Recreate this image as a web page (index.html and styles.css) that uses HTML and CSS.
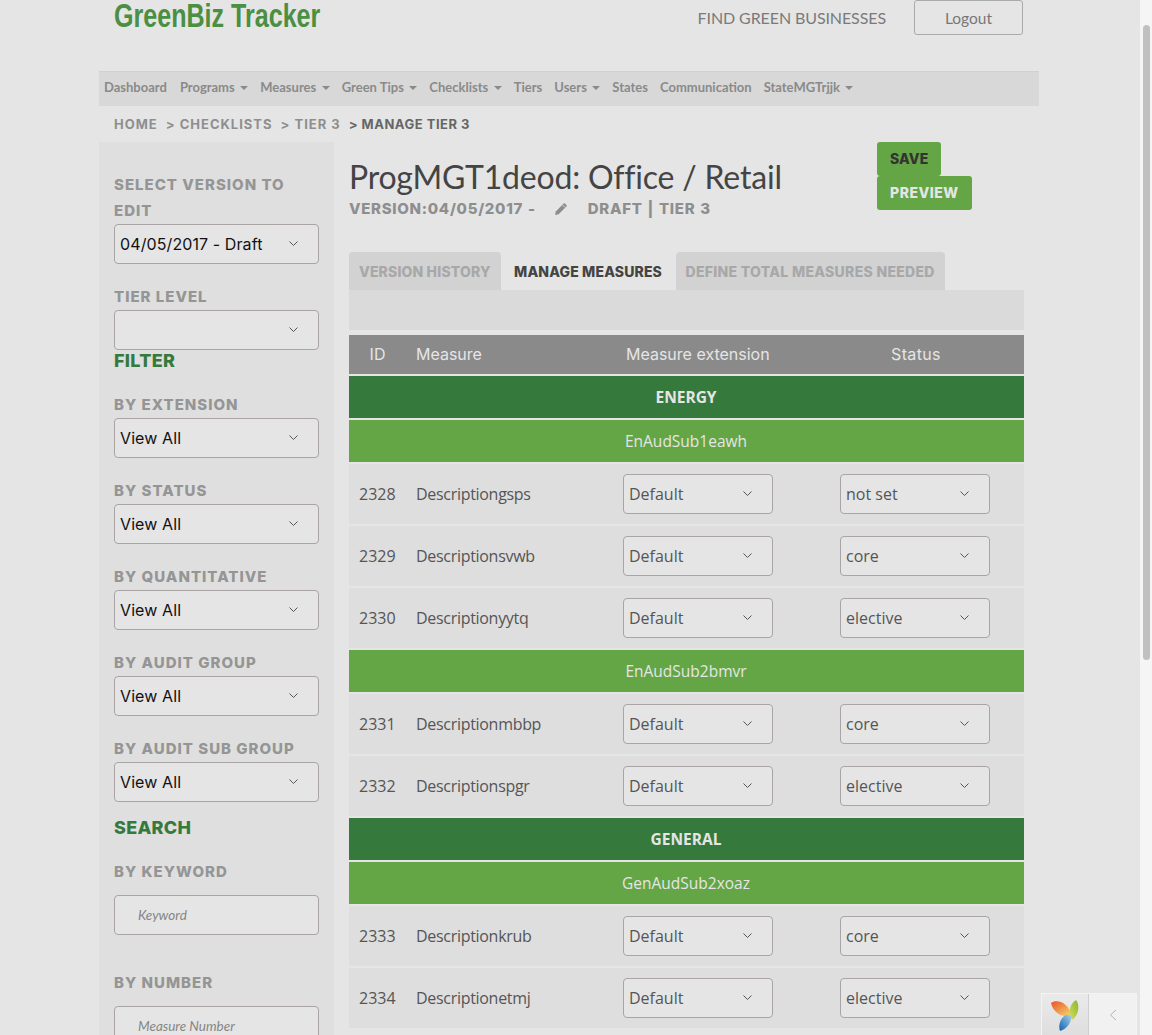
FILE: index.html
```html
<!doctype html>
<html lang="en">
<head>
    <meta http-equiv="Content-Type" content="text/html; charset=utf-8"/>
    <title>GreenBiz Tracker</title>
    <link rel="stylesheet" href="styles.css">
</head>
<body>
<div class="page">
    <div class="header">
        <div class="logo">GreenBiz Tracker</div>
        <a class="find">FIND GREEN BUSINESSES</a>
        <a class="logout">Logout</a>
    </div>

    <ul class="nav">
        <li>Dashboard</li>
        <li class="drop">Programs</li>
        <li class="drop">Measures</li>
        <li class="drop">Green Tips</li>
        <li class="drop">Checklists</li>
        <li>Tiers</li>
        <li class="drop">Users</li>
        <li>States</li>
        <li>Communication</li>
        <li class="drop">StateMGTrjjk</li>
    </ul>

    <div class="crumbs">
        <span>HOME</span>
        <span>&gt; CHECKLISTS</span>
        <span>&gt; TIER 3</span>
        <span class="last">&gt; MANAGE TIER 3</span>
    </div>

    <div class="columns">
        <div class="side">
            <label class="first">SELECT VERSION TO EDIT</label>
            <select class="pick dark"><option>04/05/2017 - Draft</option></select>
            <label class="tier">TIER LEVEL</label>
            <select class="pick"><option></option></select>
            <h4 class="filter">FILTER</h4>
            <label>BY EXTENSION</label>
            <select class="pick dark"><option>View All</option></select>
            <label>BY STATUS</label>
            <select class="pick dark"><option>View All</option></select>
            <label>BY QUANTITATIVE</label>
            <select class="pick dark"><option>View All</option></select>
            <label>BY AUDIT GROUP</label>
            <select class="pick dark"><option>View All</option></select>
            <label>BY AUDIT SUB GROUP</label>
            <select class="pick dark"><option>View All</option></select>
            <h4 class="search">SEARCH</h4>
            <label class="key">BY KEYWORD</label>
            <input class="field" placeholder="Keyword">
            <label class="num">BY NUMBER</label>
            <input class="field" placeholder="Measure Number">
        </div>

        <div class="main">
            <div class="title-row">
                <div class="title-text">
                    <h1>ProgMGT1deod: Office / Retail</h1>
                    <div class="version">
                        <span>VERSION:04/05/2017 -</span>
                        <svg class="pencil" viewBox="0 0 14 14" width="14" height="14"><path d="M1 13l.8-3.600L9.600 1.600a1 1 0 0 1 1.400 0l1.400 1.400a1 1 0 0 1 0 1.400L4.600 12.200z" fill="#8d8d8d"/><path d="M8.400 2.800l2.800 2.800" stroke="#e5e5e5" stroke-width=".8"/></svg>
                        <span>DRAFT | TIER 3</span>
                    </div>
                </div>
                <div class="actions">
                    <a class="btn save">SAVE</a>
                    <a class="btn preview">PREVIEW</a>
                </div>
            </div>

            <div class="tabs">
                <a class="tab">VERSION HISTORY</a>
                <a class="tab on">MANAGE MEASURES</a>
                <a class="tab">DEFINE TOTAL MEASURES NEEDED</a>
            </div>
            <div class="tab-bar"></div>

            <table class="grid">
                <tr class="head">
                    <th class="c-id">ID</th>
                    <th class="c-name">Measure</th>
                    <th class="c-ext">Measure extension</th>
                    <th class="c-status">Status</th>
                </tr>
                <tr class="group"><td colspan="4">ENERGY</td></tr>
                <tr class="sub"><td colspan="4">EnAudSub1eawh</td></tr>
                <tr class="row">
                    <td class="c-id">2328</td><td class="c-name">Descriptiongsps</td>
                    <td class="c-ext"><select class="pick small"><option>Default</option></select></td>
                    <td class="c-status"><select class="pick small"><option>not set</option></select></td>
                </tr>
                <tr class="row">
                    <td class="c-id">2329</td><td class="c-name">Descriptionsvwb</td>
                    <td class="c-ext"><select class="pick small"><option>Default</option></select></td>
                    <td class="c-status"><select class="pick small"><option>core</option></select></td>
                </tr>
                <tr class="row">
                    <td class="c-id">2330</td><td class="c-name">Descriptionyytq</td>
                    <td class="c-ext"><select class="pick small"><option>Default</option></select></td>
                    <td class="c-status"><select class="pick small"><option>elective</option></select></td>
                </tr>
                <tr class="sub"><td colspan="4">EnAudSub2bmvr</td></tr>
                <tr class="row">
                    <td class="c-id">2331</td><td class="c-name">Descriptionmbbp</td>
                    <td class="c-ext"><select class="pick small"><option>Default</option></select></td>
                    <td class="c-status"><select class="pick small"><option>core</option></select></td>
                </tr>
                <tr class="row">
                    <td class="c-id">2332</td><td class="c-name">Descriptionspgr</td>
                    <td class="c-ext"><select class="pick small"><option>Default</option></select></td>
                    <td class="c-status"><select class="pick small"><option>elective</option></select></td>
                </tr>
                <tr class="group"><td colspan="4">GENERAL</td></tr>
                <tr class="sub"><td colspan="4">GenAudSub2xoaz</td></tr>
                <tr class="row">
                    <td class="c-id">2333</td><td class="c-name">Descriptionkrub</td>
                    <td class="c-ext"><select class="pick small"><option>Default</option></select></td>
                    <td class="c-status"><select class="pick small"><option>core</option></select></td>
                </tr>
                <tr class="row">
                    <td class="c-id">2334</td><td class="c-name">Descriptionetmj</td>
                    <td class="c-ext"><select class="pick small"><option>Default</option></select></td>
                    <td class="c-status"><select class="pick small"><option>elective</option></select></td>
                </tr>
            </table>
        </div>
    </div>
</div>

<div class="debug">
    <div class="debug-logo">
        <svg viewBox="0 0 30 32" width="30" height="32">
            <defs>
                <linearGradient id="petalA" x1="0" y1="0" x2="1" y2="1"><stop offset="0" stop-color="#e8522c"/><stop offset="1" stop-color="#f6dc6a"/></linearGradient>
                <linearGradient id="petalB" x1="1" y1="0" x2="0" y2="1"><stop offset="0" stop-color="#86b52c"/><stop offset="1" stop-color="#d8dc62"/></linearGradient>
                <linearGradient id="petalC" x1="1" y1="0" x2="0" y2="1"><stop offset="0" stop-color="#a8d0e8"/><stop offset="1" stop-color="#0d62ad"/></linearGradient>
            </defs>
            <path d="M1 4C6 0 18 2 22 17 13 19 3 14 1 4z" fill="url(#petalA)"/>
            <path d="M26 1c4 5 3 15-4 20-4-6-3-16 4-20z" fill="url(#petalB)"/>
            <path d="M21 17c1 6-4 13-11 15-2-5 0-13 6-16 2 0 4 0 5 1z" fill="url(#petalC)"/>
        </svg>
    </div>
    <div class="debug-toggle">
        <svg viewBox="0 0 8 12" width="8" height="12"><path d="M7 1L1.500 6 7 11" fill="none" stroke="#b5b5b5" stroke-width="1"/></svg>
    </div>
</div>
<div class="scroll"><div class="thumb"></div></div>
</body>
</html>
```

FILE: styles.css
```css
html, body {
    margin: 0;
    padding: 0;
    height: 1035px;
    overflow: hidden;
    background: #e5e5e5;
}

body, ul, li, h1, h4 {
    margin: 0;
    padding: 0;
    list-style: none;
}

.page {
    width: 940px;
    margin-left: 99px;
    font-family: "Lato", "Liberation Sans", sans-serif;
}

/* top */
.header {
    height: 71px;
    display: flex;
    align-items: flex-start;
    padding: 0 16px 0 15px;
    box-sizing: border-box;
}

.logo {
    font: 700 33px/32px "Liberation Sans", sans-serif;
    color: #4a8f42;
    margin-right: auto;
    /* no narrow face installed, so squeeze the bold one */
    transform: scaleX(.76);
    transform-origin: left top;
}

.find {
    font-size: 16px;
    letter-spacing: -.1px;
    line-height: 36px;
    color: #7a7a7a;
    margin-right: 28px;
}

.logout {
    width: 107px;
    height: 33px;
    border: 1px solid #aaa;
    border-radius: 3px;
    text-align: center;
    font-size: 15.500px;
    line-height: 35px;
    color: #777;
}

.nav {
    display: flex;
    gap: 12px;
    height: 34px;
    padding-left: 5px;
    background: #d8d8d8;
    border-top: 1px solid #d0d0d0;
    font-size: 13px;
    font-weight: 700;
    line-height: 30px;
    color: #8a8a8a;
}

.nav li:first-child {
    margin-right: 1px;
}

.nav .drop::after {
    content: "";
    display: inline-block;
    margin-left: 5.500px;
    vertical-align: 2px;
    border-top: 4px solid #8a8a8a;
    border-left: 4px solid transparent;
    border-right: 4px solid transparent;
}

.crumbs {
    display: flex;
    gap: 8px;
    height: 36px;
    padding-left: 15px;
    font: 700 13px/36px "Inter", "Liberation Sans", sans-serif;
    letter-spacing: 1px;
    color: #8e8e8e;
}

.crumbs .last {
    letter-spacing: .5px;
    color: #666;
}

.columns {
    display: flex;
}

/* left filters */
.side {
    width: 205px;
    height: 893px;
    padding: 0 15px;
    background: #dfdfdf;
    flex: none;
}

.side label {
    display: block;
    font: 800 15px/26px "Inter", "Liberation Sans", sans-serif;
    letter-spacing: 1px;
    color: #959595;
    margin-top: 20px;
}

.side label.first {
    margin-top: 30px;
}

.side label.tier {
    margin-top: 20px;
}

.side label.key {
    margin-top: 20px;
    margin-bottom: 10px;
}

.side label.num {
    margin-top: 35px;
    margin-bottom: 10px;
}

.side h4 {
    font: 800 18px/22px "Inter", "Liberation Sans", sans-serif;
    letter-spacing: .3px;
    color: #357a3c;
}

.side h4.filter {
    margin-bottom: -20px;
}

.side h4.filter + label {
    margin-top: 40px;
}

.side h4.search {
    margin-top: 15px;
}

.pick {
    display: block;
    appearance: none;
    -webkit-appearance: none;
    box-sizing: border-box;
    width: 205px;
    height: 40px;
    padding: 0 24px 0 5px;
    border: 1px solid #aaa4a4;
    border-radius: 4px;
    background: #e5e5e5 url("data:image/svg+xml,%3Csvg xmlns='http://www.w3.org/2000/svg' width='9' height='5'%3E%3Cpath d='M.5.5l4 4 4-4' fill='none' stroke='%23555'/%3E%3C/svg%3E") no-repeat right 20px top 16px;
    font: 400 16px "Inter", "Liberation Sans", sans-serif;
    letter-spacing: .1px;
    color: #555;
}

.pick.dark {
    color: #111;
}

.pick.small {
    width: 150px;
    font: 400 16px "Open Sans", "Liberation Sans", sans-serif;
    letter-spacing: 0;
    color: #555;
}

.field {
    display: block;
    box-sizing: border-box;
    width: 205px;
    height: 40px;
    padding: 0 23px;
    border: 1px solid #aaa4a4;
    border-radius: 4px;
    background: #e5e5e5;
    font: italic 13.500px "Lato", "Liberation Sans", sans-serif;
}

.field::placeholder {
    color: #858585;
    opacity: 1;
}

/* right */
.main {
    width: 675px;
    margin-left: 15px;
}

.title-row {
    display: flex;
    height: 110px;
}

.title-text {
    width: 528px;
    padding-top: 14px;
}

h1 {
    font-size: 32px;
    font-weight: 400;
    letter-spacing: -.2px;
    line-height: 41px;
    margin-bottom: 2px;
    color: #444;
}

.version {
    display: flex;
    align-items: center;
    font: 800 15px/20px "Inter", "Liberation Sans", sans-serif;
    letter-spacing: .7px;
    word-spacing: 1px;
    color: #8e8e8e;
}

.pencil {
    margin: 0 20px 0 18px;
}

.actions {
    display: flex;
    flex-direction: column;
    align-items: flex-start;
}

.btn {
    height: 34px;
    padding: 0 13px;
    border-radius: 3px;
    background: #64a546;
    font: 800 14px/34px "Inter", "Liberation Sans", sans-serif;
    letter-spacing: .5px;
}

.save {
    letter-spacing: .1px;
    color: #333;
}

.preview {
    color: #e5e5e5;
}

.tabs {
    display: flex;
    gap: 3px;
    height: 38px;
}

.tab {
    padding: 0 10px;
    border-radius: 4px 4px 0 0;
    background: #d2d2d2;
    font: 800 14px/39px "Inter", "Liberation Sans", sans-serif;
    letter-spacing: .15px;
    color: #a8a8a8;
}

.tab.on {
    margin-top: 1px;
    padding: 0 10.500px;
    background: #e5e5e5;
    line-height: 38px;
    color: #444;
}

.tab:last-child {
    letter-spacing: .3px;
}

.tab-bar {
    height: 40px;
    background: #dadada;
}

.grid {
    width: 675px;
    margin-top: 3px;
    border-collapse: separate;
    border-spacing: 0 2px;
    table-layout: fixed;
    font: 400 16px "Open Sans", "Liberation Sans", sans-serif;
    color: #555;
}

.grid th, .grid td {
    padding: 0;
    box-sizing: border-box;
}

.grid .c-id { width: 67px; }
.grid .c-name { width: 207px; }
.grid .c-ext { width: 217px; }

.grid td.c-id { padding-left: 10px; }
.grid td.c-name { letter-spacing: -.3px; }

.head th {
    height: 39px;
    padding-bottom: 2px;
    background: #8a8a8a;
    color: #e5e5e5;
    font: 400 16px "Inter", "Liberation Sans", sans-serif;
    text-align: left;
}

.head th.c-id { text-align: center; padding-right: 10px; }
.head th.c-ext { padding-left: 3px; }
.head th.c-status { text-align: center; padding-right: 32px; letter-spacing: .35px; }

.group td {
    height: 42px;
    padding: 0 1px 0 0;
    background: #357a3c;
    color: #e5e5e5;
    font-weight: 700;
    font-size: 15.500px;
    text-align: center;
}

.sub td {
    height: 42px;
    padding: 0 1px 0 0;
    background: #64a546;
    color: #e5e5e5;
    font-size: 15.500px;
    text-align: center;
}

.row td {
    height: 60px;
    background: #dedede;
}

/* debug toolbar and page scrollbar */
.debug {
    position: fixed;
    right: 15px;
    bottom: 0;
    display: flex;
    height: 41px;
    border: 1px solid #f3f3f3;
    border-bottom: 0;
}

.debug-logo {
    width: 46px;
    display: flex;
    align-items: center;
    justify-content: center;
    background: linear-gradient(#eaeaea, #dedede);
    border-right: 1px solid #cfcfcf;
}

.debug-toggle {
    width: 47px;
    display: flex;
    align-items: center;
    justify-content: center;
    background: #f1f1f1;
}

.scroll {
    position: fixed;
    top: 0;
    right: 0;
    width: 12px;
    height: 1035px;
    background: #f5f5f5;
}

.thumb {
    width: 7px;
    height: 635px;
    margin: 25px 0 0 3px;
    border-radius: 4px;
    background: #c0c0c0;
}
```
